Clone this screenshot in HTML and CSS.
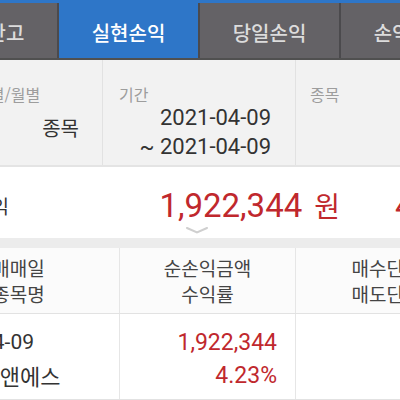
FILE: index.html
```html
<!DOCTYPE html>
<html lang="ko">
<head>
<meta charset="utf-8">
<link rel="stylesheet" href="styles.css">
</head>
<body>
<div class="screen">
  <div class="tabs">
    <div class="tab">주식잔고</div>
    <div class="tab active">실현손익</div>
    <div class="tab">당일손익</div>
    <div class="tab">손익분석</div>
  </div>
  <div class="filter">
    <div class="cell c1">
      <div class="label">일별/월별</div>
      <div class="value">종목</div>
    </div>
    <div class="cell c2">
      <div class="label">기간</div>
      <div class="dates">
        <div>2021-04-09</div>
        <div>~ 2021-04-09</div>
      </div>
    </div>
    <div class="cell c3">
      <div class="label">종목</div>
    </div>
  </div>
  <div class="summary">
    <div class="s-label">실현손익</div>
    <div class="s-amount">1,922,344<span class="won">원</span></div>
    <div class="s-rate">4.23%</div>
    <svg class="chev" width="22" height="7" viewBox="0 0 22 7"><path d="M1 1 L11 5.5 L21 1" fill="none" stroke="#cfcfcf" stroke-width="2" stroke-linecap="round"/></svg>
  </div>
  <div class="band"></div>
  <div class="trow thead">
    <div class="col k1"><div>매매일</div><div>종목명</div></div>
    <div class="col k2"><div>순손익금액</div><div>수익률</div></div>
    <div class="col k3"><div>매수단가</div><div>매도단가</div></div>
  </div>
  <div class="trow tbody">
    <div class="col k1"><div class="date">2021-04-09</div><div class="name">티에스앤에스</div></div>
    <div class="col k2 red"><div>1,922,344</div><div>4.23%</div></div>
    <div class="col k3"></div>
  </div>
</div>
</body>
</html>
```
FILE: styles.css
```css
html, body {
  margin: 0;
  padding: 0;
  width: 400px;
  height: 400px;
  overflow: hidden;
  background: #ffffff;
}
.screen {
  margin-left: -82px;
  width: 620px;
  font-family: "Roboto", "Noto Sans CJK KR", sans-serif;
  color: #333;
}
.tabs {
  display: flex;
  gap: 2px;
  background: #4b4a4d;
  border-top: 3px solid #2e76c8;
  border-bottom: 2px solid #505050;
  height: 55px;
}
.tab {
  width: 139px;
  flex: none;
  background: #646266;
  color: #dcdcdc;
  font-family: "Noto Sans CJK KR", sans-serif;
  font-size: 20px;
  font-weight: 500;
  display: flex;
  align-items: center;
  justify-content: center;
  padding-top: 3px;
  box-sizing: border-box;
}
.tab.active {
  background: #2e76c8;
  color: #ffffff;
}
.filter {
  display: flex;
  background: #f2f2f2;
  height: 105px;
  border-bottom: 2px solid #e4e4e4;
}
.cell {
  box-sizing: border-box;
  padding-top: 25px;
  border-right: 1px solid #e2e2e2;
}
.label {
  font-family: "Noto Sans CJK KR", sans-serif;
  font-size: 16px;
  line-height: 18px;
  color: #9d9d9d;
}
.c1 {
  width: 185px;
  padding-left: 57px;
  padding-right: 23px;
}
.c1 .value {
  text-align: right;
  font-family: "Noto Sans CJK KR", sans-serif;
  font-size: 20px;
  line-height: 29px;
  margin-top: 10px;
  color: #333;
}
.c2 {
  width: 193px;
  padding-left: 16px;
  padding-right: 24px;
}
.dates {
  text-align: right;
  font-size: 22px;
  line-height: 29px;
  color: #333;
}
.c3 {
  flex: 1;
  padding-left: 14px;
  border-right: none;
}
.summary {
  position: relative;
  display: grid;
  grid-template-columns: 230px 192px 1fr;
  align-items: center;
  height: 71px;
  padding-top: 5px;
  box-sizing: border-box;
  background: #ffffff;
}
.s-label {
  padding-left: 21px;
  font-family: "Noto Sans CJK KR", sans-serif;
  font-size: 19px;
  color: #333;
}
.s-amount {
  text-align: right;
  font-size: 33px;
  color: #c0282d;
  white-space: nowrap;
}
.won {
  font-family: "Noto Sans CJK KR", sans-serif;
  font-size: 28px;
  margin-left: 12px;
}
.s-rate {
  padding-left: 55px;
  font-size: 33px;
  color: #c0282d;
}
.chev {
  position: absolute;
  left: 268px;
  top: 60px;
}
.band {
  height: 10px;
  background: #ececec;
}
.trow {
  display: flex;
  border-bottom: 1px solid #e2e2e2;
}
.col {
  box-sizing: border-box;
  border-right: 1px solid #e6e6e6;
}
.k1 { width: 202px; }
.k2 { width: 176px; }
.k3 { width: 182px; }
.thead {
  height: 65px;
  background: #fbfbfb;
}
.thead .col {
  display: flex;
  flex-direction: column;
  justify-content: center;
  align-items: center;
  font-family: "Noto Sans CJK KR", sans-serif;
  font-size: 19px;
  line-height: 26px;
  color: #444;
}
.tbody {
  height: 85px;
  background: #ffffff;
}
.tbody .col {
  padding-top: 12px;
  line-height: 33px;
}
.tbody .k1 {
  padding-left: 10px;
}
.date {
  font-size: 21px;
  color: #333;
}
.name {
  font-family: "Noto Sans CJK KR", sans-serif;
  font-size: 22px;
  margin-left: 11px;
  color: #333;
}
.tbody .k2 {
  text-align: right;
  padding-right: 18px;
  font-size: 23px;
}
.red { color: #c0282d; }
```
